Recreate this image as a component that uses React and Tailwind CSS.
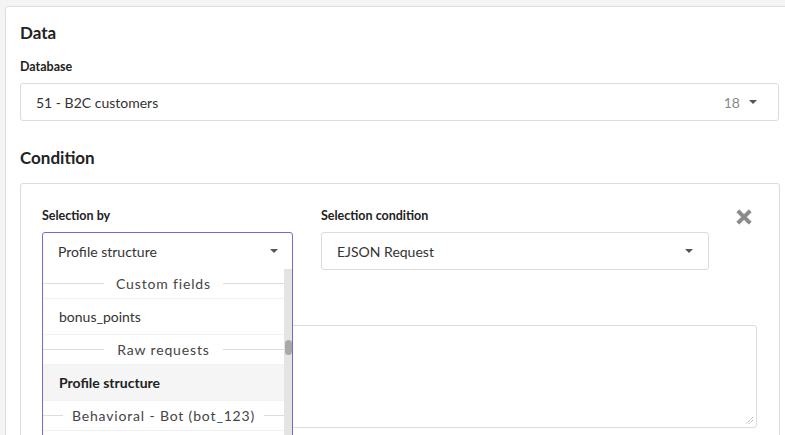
import React from "react";

const font = { fontFamily: "Lato, 'Noto Sans', sans-serif" };

const Caret = ({ className = "" }) => (
  <svg width="8" height="4" viewBox="0 0 8 4" className={className}>
    <path d="M0 0h8L4 4z" fill="#555" />
  </svg>
);

const CloseIcon = () => (
  <svg width="16" height="16" viewBox="0 0 16 16">
    <path
      d="M3.2 0.8 8 5.6 12.8 0.8 15.2 3.2 10.4 8 15.2 12.8 12.8 15.2 8 10.4 3.2 15.2 0.8 12.8 5.6 8 0.8 3.2z"
      fill="#8a8a8a"
      strokeLinejoin="round"
      stroke="#8a8a8a"
      strokeWidth="0.8"
    />
  </svg>
);

const GroupHeader = ({ label, wide }) => (
  <div className="flex items-center h-[30px] border-b border-[#f2f2f2] whitespace-nowrap">
    <div className={`h-px bg-[#dcdcdc] ${wide ? "w-[20px]" : "w-[61px]"}`} />
    <span className="flex-1 text-center text-[14px] tracking-[0.06em] text-[#444]">{label}</span>
    <div className={`h-px bg-[#dcdcdc] ${wide ? "w-[20px]" : "w-[61px]"}`} />
  </div>
);

const Option = ({ label, active }) => (
  <div
    className={`flex items-center h-[36px] pl-[16px] text-[14px] border-b border-[#f2f2f2] ${
      active ? "bg-[#f5f5f5] font-bold text-[#222]" : "text-[#333]"
    }`}
  >
    {label}
  </div>
);

export default function App() {
  return (
    <div className="h-[435px] overflow-hidden bg-[#f4f4f4] pt-[6px] pl-[5px]" style={font}>
      <div className="w-[790px] h-[440px] bg-white border border-[#dedede] rounded-[3px] pl-[14px] pt-[14px]">
        <h2 className="text-[17px] leading-[24px] font-bold text-[#222]">Data</h2>
        <div className="mt-[14px] text-[12.5px] leading-[16px] font-bold text-[#222]">Database</div>
        <div className="mt-[8px] w-[759px] h-[38px] border border-[#dcdcdc] rounded-[3px] flex items-center pl-[15px] pr-[21px] text-[14px] text-[#333]">
          <span className="flex-1">51 - B2C customers</span>
          <span className="text-[#888] mr-[9px]">18</span>
          <Caret />
        </div>

        <h2 className="mt-[25px] text-[17px] leading-[24px] font-bold text-[#222]">Condition</h2>

        <div className="mt-[13px] w-[760px] h-[300px] border border-[#dcdcdc] rounded-[3px] pl-[21px] pt-[24px] relative">
          <div className="flex">
            <div className="w-[251px]">
              <div className="text-[12.5px] leading-[16px] font-bold text-[#222]">Selection by</div>
            </div>
            <div className="w-[388px] ml-[28px]">
              <div className="text-[12.5px] leading-[16px] font-bold text-[#222]">Selection condition</div>
              <div className="mt-[8px] h-[38px] border border-[#dcdcdc] rounded-[3px] flex items-center pl-[15px] pr-[15px] text-[14px] text-[#333]">
                <span className="flex-1">EJSON Request</span>
                <Caret />
              </div>
            </div>
            <div className="ml-[27px] mt-[1px]">
              <CloseIcon />
            </div>
          </div>

          <div className="mt-[55px] w-[715px] h-[103px] border border-[#dcdcdc] rounded-[3px] relative">
            <svg width="9" height="9" viewBox="0 0 9 9" className="absolute right-[2px] bottom-[2px]">
              <path d="M8 1 1 8M8 4 4 8" stroke="#999" strokeWidth="1" strokeDasharray="1 1" />
            </svg>
          </div>

          <div className="absolute left-[21px] top-[48px] w-[251px] h-[210px] bg-white border border-[#7b66d8] rounded-t-[3px] overflow-hidden">
            <div className="h-[36px] flex items-center pl-[15px] pr-[14px] text-[14px] text-[#333]">
              <span className="flex-1">Profile structure</span>
              <Caret />
            </div>
            <div className="flex">
              <div className="flex-1">
                <GroupHeader label="Custom fields" />
                <Option label="bonus_points" />
                <GroupHeader label="Raw requests" />
                <Option label="Profile structure" active />
                <GroupHeader label="Behavioral - Bot (bot_123)" wide />
                <Option label="" />
              </div>
              <div className="w-[8px] bg-[#e4e4e4] relative">
                <div className="absolute left-[1px] top-[71px] w-[7px] h-[15px] rounded-[4px] bg-[#a9a9a9]" />
              </div>
            </div>
          </div>
        </div>
      </div>
    </div>
  );
}
